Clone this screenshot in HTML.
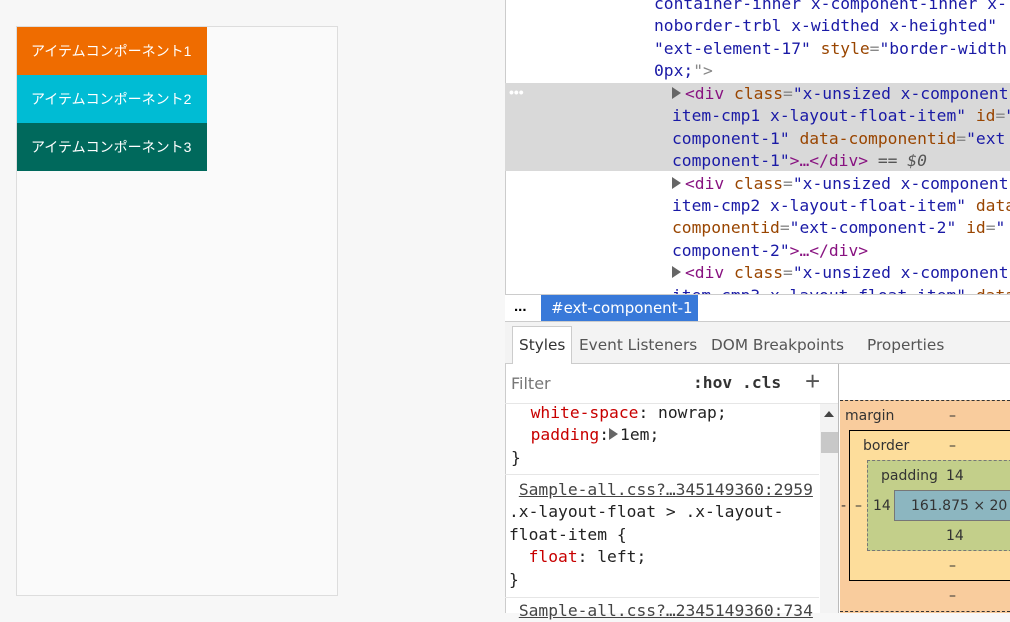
<!DOCTYPE html>
<html><head><meta charset="utf-8"><style>
*{margin:0;padding:0;box-sizing:border-box}
body{width:1010px;height:613px;overflow:hidden;background:#f7f7f7;position:relative;font-family:"Liberation Sans","Noto Sans CJK JP",sans-serif}
.a{position:absolute;white-space:nowrap}
.cont{left:16px;top:26px;width:322px;height:570px;background:#fafafa;border:1px solid #ddd}
.it{left:17px;width:190px;height:48px;color:#fff;font-size:14px;line-height:48px;padding-left:14px}
.dt{left:505px;top:0;width:505px;height:613px;background:#fff;border-left:1px solid #ccc}
.code{font-family:"DejaVu Sans Mono","Liberation Mono",monospace;font-size:16.3px;line-height:22.4px;color:#1a1aa6}
.tg{color:#881280}.at{color:#994500}.vl{color:#1a1aa6}.gr{color:#888}
.ui{font-family:"DejaVu Sans","Liberation Sans",sans-serif}
.pn{color:#c80000}
.tri{display:inline-block;width:0;height:0;border-left:9px solid #666;border-top:6px solid transparent;border-bottom:6px solid transparent;margin-right:4px}
</style></head><body>
<div class="a cont"></div>
<div class="a it" style="top:27px;background:#ef6c00">アイテムコンポーネント1</div>
<div class="a it" style="top:75px;background:#00bcd4">アイテムコンポーネント2</div>
<div class="a it" style="top:123px;background:#00695c">アイテムコンポーネント3</div>

<div class="a dt"></div>
<div class="a" style="left:505px;top:83px;width:505px;height:88px;background:#d9d9d9"></div>
<div class="a" style="left:509px;top:84px;color:#fff;font-size:14px;font-weight:bold">•••</div>
<div class="a code" style="left:654px;top:-7px">
<div>container-inner x-component-inner x-</div>
<div>noborder-trbl x-widthed x-heighted"</div>
<div><span class="vl">"ext-element-17"</span> <span class="at">style</span><span class="gr">=</span>"border-width</div>
<div>0px;<span class="gr">"&gt;</span></div>
</div>
<div class="a code" style="left:672px;top:83px">
<div><span class="tri"></span><span class="tg">&lt;div</span> <span class="at">class</span><span class="gr">=</span>"x-unsized x-component</div>
<div>item-cmp1 x-layout-float-item" <span class="at">id</span><span class="gr">=</span>"</div>
<div>component-1" <span class="at">data-componentid</span><span class="gr">=</span>"ext</div>
<div>component-1"<span class="tg">&gt;…&lt;/div&gt;</span> <span style="color:#555">== <i>$0</i></span></div>
<div><span class="tri"></span><span class="tg">&lt;div</span> <span class="at">class</span><span class="gr">=</span>"x-unsized x-component</div>
<div>item-cmp2 x-layout-float-item" <span class="at">data</span></div>
<div><span class="at">componentid</span><span class="gr">=</span>"ext-component-2" <span class="at">id</span><span class="gr">=</span>"</div>
<div>component-2"<span class="tg">&gt;…&lt;/div&gt;</span></div>
<div><span class="tri"></span><span class="tg">&lt;div</span> <span class="at">class</span><span class="gr">=</span>"x-unsized x-component</div>
<div>item-cmp3 x-layout-float-item" <span class="at">data</span></div>
</div>
<div class="a" style="left:505px;top:294px;width:505px;height:28px;background:#fff;border-top:1px solid #ccc;border-bottom:1px solid #ccc"></div>
<div class="a" style="left:514px;top:298px;font-size:15px;font-weight:bold">...</div>
<div class="a ui" style="left:541px;top:295px;width:157px;height:26px;background:#3879d9;color:#fff;font-size:15px;line-height:26px;padding-left:10px">#ext-component-1</div>
<div class="a ui" style="left:505px;top:322px;width:505px;height:42px;background:#f3f3f3;border-bottom:1px solid #ccc"></div>
<div class="a ui" style="left:512px;top:326px;width:60px;height:38px;background:#fff;border:1px solid #ccc;border-bottom:none"></div>
<div class="a ui" style="left:519px;top:336px;font-size:15.3px;color:#333">Styles</div>
<div class="a ui" style="left:579px;top:336px;font-size:15.3px;color:#555">Event Listeners</div>
<div class="a ui" style="left:711px;top:336px;font-size:15.3px;color:#555">DOM Breakpoints</div>
<div class="a ui" style="left:867px;top:336px;font-size:15.3px;color:#555">Properties</div>
<div class="a ui" style="left:511px;top:374px;font-size:16px;color:#777">Filter</div>
<div class="a code" style="left:693px;top:372px;color:#333;font-weight:bold">:hov .cls</div>
<div class="a" style="left:805px;top:366px;font-size:26px;color:#555">+</div>
<div class="a" style="left:505px;top:403px;width:334px;height:1px;background:#e6e6e6"></div>
<div class="a" style="left:838px;top:364px;width:1px;height:249px;background:#bbb"></div>
<div class="a" style="left:820px;top:404px;width:18px;height:209px;background:#f3f3f3"></div>
<div class="a" style="left:821px;top:432px;width:17px;height:21px;background:#c8c8c8"></div>
<div class="a" style="left:824px;top:411px;border-left:5px solid transparent;border-right:5px solid transparent;border-bottom:6px solid #444"></div>
<div class="a code" style="left:511px;top:402px;color:#222">
<div>&nbsp;&nbsp;<span class="pn">white-space</span>: nowrap;</div>
<div>&nbsp;&nbsp;<span class="pn">padding</span>:<span class="tri" style="margin-right:2px"></span>1em;</div>
<div>}</div>
</div>
<div class="a" style="left:505px;top:474px;width:314px;height:1px;background:#e6e6e6"></div>
<div class="a code" style="left:509px;top:479px;color:#222">
<div style="color:#444">&nbsp;<u>Sample-all.css?…345149360:2959</u></div>
<div>.x-layout-float &gt; .x-layout-</div>
<div>float-item {</div>
<div>&nbsp;&nbsp;<span class="pn">float</span>: left;</div>
<div>}</div>
</div>
<div class="a" style="left:505px;top:597px;width:314px;height:1px;background:#e6e6e6"></div>
<div class="a code" style="left:509px;top:600px;color:#444">&nbsp;<u>Sample-all.css?…2345149360:734</u></div>

<div class="a" style="left:840px;top:400px;width:170px;height:213px;background:#f9cc9d;border-top:1px dashed #333"></div>
<div class="a ui" style="left:845px;top:408px;font-size:14px;color:#333">margin</div>
<div class="a ui" style="left:949px;top:408px;font-size:14px;color:#333">–</div>
<div class="a" style="left:849px;top:430px;width:170px;height:151px;background:#fddd9b;border:1.5px solid #000"></div>
<div class="a ui" style="left:863px;top:438px;font-size:14px;color:#333">border</div>
<div class="a ui" style="left:949px;top:438px;font-size:14px;color:#333">–</div>
<div class="a" style="left:867px;top:460px;width:150px;height:91px;background:#c3cf8a;border:1px dashed #777"></div>
<div class="a ui" style="left:881px;top:468px;font-size:14px;color:#333">padding</div>
<div class="a ui" style="left:946px;top:468px;font-size:14px;color:#333">14</div>
<div class="a ui" style="left:873px;top:498px;font-size:14px;color:#333">14</div>
<div class="a ui" style="left:855px;top:498px;font-size:14px;color:#333">–</div>
<div class="a ui" style="left:841px;top:498px;font-size:14px;color:#333">-</div>
<div class="a" style="left:894px;top:490px;width:130px;height:31px;background:#8cb6c0;border:1px solid #777"></div>
<div class="a ui" style="left:911px;top:498px;font-size:14px;color:#333">161.875 × 20</div>
<div class="a ui" style="left:946px;top:528px;font-size:14px;color:#333">14</div>
<div class="a ui" style="left:949px;top:558px;font-size:14px;color:#333">–</div>
<div class="a ui" style="left:949px;top:588px;font-size:14px;color:#333">–</div>
<div class="a" style="left:840px;top:611px;width:170px;height:1px;border-top:1px dashed #333"></div>
</body></html>
